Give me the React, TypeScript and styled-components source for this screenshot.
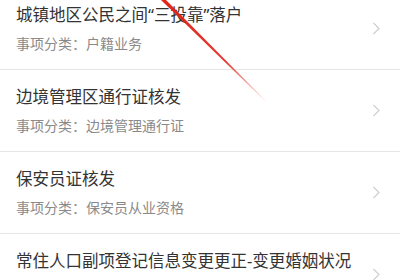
import React from "react";
import styled, { createGlobalStyle } from "styled-components";

const Global = createGlobalStyle`
  html, body { margin: 0; padding: 0; background: #fff; }
  body {
    width: 400px; height: 280px; overflow: hidden;
    font-family: "Noto Sans CJK SC", "Noto Sans", sans-serif;
  }
`;

const Page = styled.div`
  position: relative;
  width: 400px;
  height: 280px;
  overflow: hidden;
  background: #fff;
`;

const List = styled.ul`
  list-style: none;
  margin: -12px 0 0 0;
  padding: 0;
`;

const Row = styled.li`
  display: flex;
  align-items: center;
  height: 81px;
  padding: 0 16px;
  border-bottom: 1px solid #e6e6e6;
`;

const Texts = styled.div`
  flex: 1;
  display: flex;
  flex-direction: column;
  gap: 7px;
`;

const Title = styled.div`
  font-family: "Noto Sans", "Noto Sans CJK SC", sans-serif;
  font-size: 16.5px;
  line-height: 22px;
  color: #333;
  white-space: nowrap;
`;

const Sub = styled.div`
  font-size: 14px;
  line-height: 20px;
  color: #8a8a8a;
  white-space: nowrap;
`;

const Chevron = styled.svg`
  flex: none;
  width: 8px;
  height: 13px;
  margin-right: 4px;
`;

const Annotation = styled.svg`
  position: absolute;
  left: 0;
  top: 0;
  pointer-events: none;
`;

const items = [
  { title: "城镇地区公民之间“三投靠”落户", sub: "事项分类：户籍业务" },
  { title: "边境管理区通行证核发", sub: "事项分类：边境管理通行证" },
  { title: "保安员证核发", sub: "事项分类：保安员从业资格" },
  { title: "常住人口副项登记信息变更更正-变更婚姻状况", sub: "事项分类：户籍业务" },
];

export default function App() {
  return (
    <Page>
      <Global />
      <List>
        {items.map((it) => (
          <Row key={it.title}>
            <Texts>
              <Title>{it.title}</Title>
              <Sub>{it.sub}</Sub>
            </Texts>
            <Chevron viewBox="0 0 8 13">
              <path d="M1.5 1 L7 6.5 L1.5 12" fill="none" stroke="#cfcfcf" strokeWidth="1.2" />
            </Chevron>
          </Row>
        ))}
      </List>
      <Annotation width="400" height="280">
        <defs>
          <linearGradient id="fade" x1="163" y1="0" x2="268" y2="103" gradientUnits="userSpaceOnUse">
            <stop offset="0" stopColor="#e02418" stopOpacity="1" />
            <stop offset="0.6" stopColor="#e02418" stopOpacity="0.9" />
            <stop offset="1" stopColor="#e02418" stopOpacity="0" />
          </linearGradient>
        </defs>
        <polygon points="161,0 166,0 268,103 267,103" fill="url(#fade)" />
      </Annotation>
    </Page>
  );
}
